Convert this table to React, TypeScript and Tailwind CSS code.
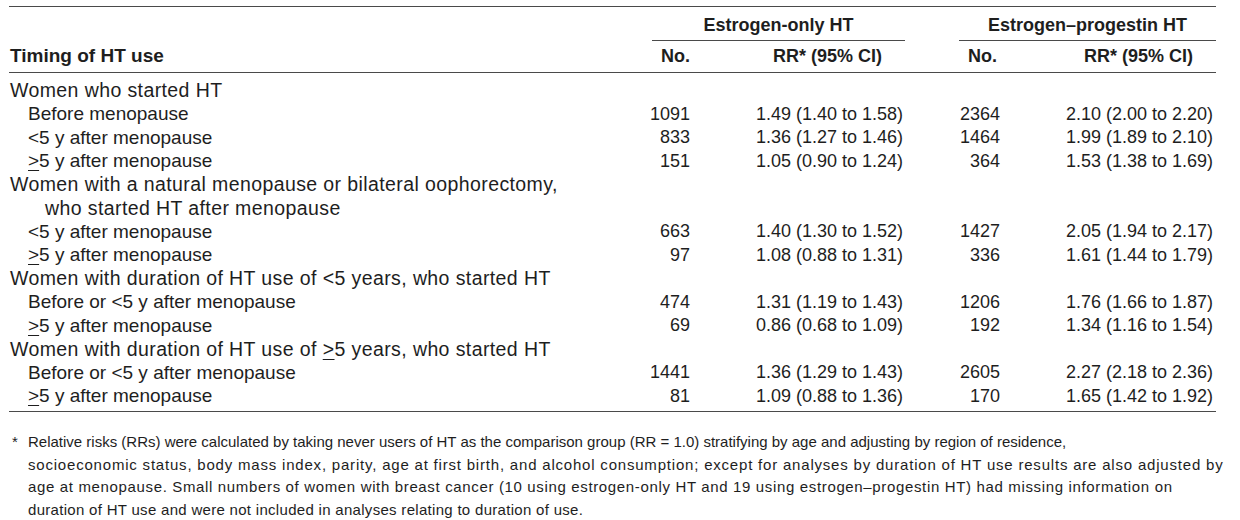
import React from "react";

type Row = {
  label: React.ReactNode;
  indent: 0 | 1 | 2;
  n1?: string;
  rr1?: string;
  n2?: string;
  rr2?: string;
};

const GE = () => <span className="underline underline-offset-[3px] decoration-1">&gt;</span>;

const rows: Row[] = [
  { label: "Women who started HT", indent: 0 },
  { label: "Before menopause", indent: 1, n1: "1091", rr1: "1.49 (1.40 to 1.58)", n2: "2364", rr2: "2.10 (2.00 to 2.20)" },
  { label: "<5 y after menopause", indent: 1, n1: "833", rr1: "1.36 (1.27 to 1.46)", n2: "1464", rr2: "1.99 (1.89 to 2.10)" },
  { label: <><GE />5 y after menopause</>, indent: 1, n1: "151", rr1: "1.05 (0.90 to 1.24)", n2: "364", rr2: "1.53 (1.38 to 1.69)" },
  { label: "Women with a natural menopause or bilateral oophorectomy,", indent: 0 },
  { label: "who started HT after menopause", indent: 2 },
  { label: "<5 y after menopause", indent: 1, n1: "663", rr1: "1.40 (1.30 to 1.52)", n2: "1427", rr2: "2.05 (1.94 to 2.17)" },
  { label: <><GE />5 y after menopause</>, indent: 1, n1: "97", rr1: "1.08 (0.88 to 1.31)", n2: "336", rr2: "1.61 (1.44 to 1.79)" },
  { label: "Women with duration of HT use of <5 years, who started HT", indent: 0 },
  { label: "Before or <5 y after menopause", indent: 1, n1: "474", rr1: "1.31 (1.19 to 1.43)", n2: "1206", rr2: "1.76 (1.66 to 1.87)" },
  { label: <><GE />5 y after menopause</>, indent: 1, n1: "69", rr1: "0.86 (0.68 to 1.09)", n2: "192", rr2: "1.34 (1.16 to 1.54)" },
  { label: <>Women with duration of HT use of <GE />5 years, who started HT</>, indent: 0 },
  { label: "Before or <5 y after menopause", indent: 1, n1: "1441", rr1: "1.36 (1.29 to 1.43)", n2: "2605", rr2: "2.27 (2.18 to 2.36)" },
  { label: <><GE />5 y after menopause</>, indent: 1, n1: "81", rr1: "1.09 (0.88 to 1.36)", n2: "170", rr2: "1.65 (1.42 to 1.92)" },
];

export default function App() {
  return (
    <div
      className="w-[1240px] h-[520px] bg-white text-[#1e1e1e] pt-[6px] pl-[9px] overflow-hidden"
      style={{ fontFamily: '"Liberation Sans", Arial, sans-serif' }}
    >
      <div className="w-[1207px]">
        {/* top rule */}
        <div className="border-t border-[#4a4a4a]" />
        {/* group header row */}
        <div className="flex h-[34px] text-[18px] font-bold">
          <div className="w-[643px]" />
          <div className="w-[253px] flex items-center justify-center pt-[3px] border-b border-[#4a4a4a]">
            Estrogen-only HT
          </div>
          <div className="w-[54px]" />
          <div className="w-[257px] flex items-center justify-center pt-[3px] border-b border-[#4a4a4a]">
            Estrogen–progestin HT
          </div>
        </div>
        {/* column header row */}
        <div className="flex h-[32px] items-center text-[18px] font-bold border-b border-[#4a4a4a]">
          <div className="w-[631px] pl-[1px] text-[19px]">Timing of HT use</div>
          <div className="w-[50px] text-right">No.</div>
          <div className="w-[215px] text-right pr-[23px]">RR* (95% CI)</div>
          <div className="w-[95px] text-right pr-[3px]">No.</div>
          <div className="w-[216px] text-right pr-[23px]">RR* (95% CI)</div>
        </div>
        {/* body */}
        <div className="pt-[6px] pb-[3px] border-b border-[#4a4a4a] text-[18px]">
          {rows.map((r, i) => (
            <div key={i} className="flex h-[23.5px] items-center whitespace-nowrap">
              <div
                className={
                  "w-[631px] " +
                  (r.indent === 0
                    ? "pl-[1px] text-[19.5px] tracking-[0.4px]"
                    : r.indent === 1
                    ? "pl-[19px] text-[19px]"
                    : "pl-[36px] text-[19.5px] tracking-[0.4px]")
                }
              >
                {r.label}
              </div>
              <div className="w-[50px] text-right">{r.n1}</div>
              <div className="w-[215px] text-right pr-[2px]">{r.rr1}</div>
              <div className="w-[95px] text-right">{r.n2}</div>
              <div className="w-[216px] text-right pr-[3px]">{r.rr2}</div>
            </div>
          ))}
        </div>
      </div>
      {/* footnote */}
      <div className="mt-[19px] flex text-[15px] leading-[22.5px] whitespace-nowrap">
        <div className="w-[19px] pl-[3px]">*</div>
        <div>
          <div>Relative risks (RRs) were calculated by taking never users of HT as the comparison group (RR = 1.0) stratifying by age and adjusting by region of residence,</div>
          <div className="tracking-[0.8px]">socioeconomic status, body mass index, parity, age at first birth, and alcohol consumption; except for analyses by duration of HT use results are also adjusted by</div>
          <div className="tracking-[0.65px]">age at menopause. Small numbers of women with breast cancer (10 using estrogen-only HT and 19 using estrogen–progestin HT) had missing information on</div>
          <div className="tracking-[0.3px]">duration of HT use and were not included in analyses relating to duration of use.</div>
        </div>
      </div>
    </div>
  );
}
